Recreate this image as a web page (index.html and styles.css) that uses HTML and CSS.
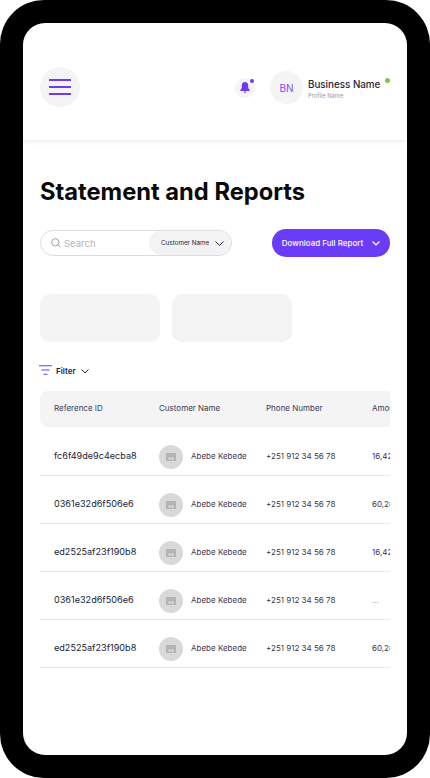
FILE: index.html
```html
<!DOCTYPE html>
<html lang="en">
<head>
  <meta charset="UTF-8">
  <meta name="viewport" content="width=device-width, initial-scale=1.0">
  <title>Statement and Reports</title>
  <link rel="stylesheet" href="styles.css">
</head>
<body>
  <div class="phone">
    <div class="screen">
      <header class="topbar">
        <div class="menu-btn">
          <svg width="22" height="16" viewBox="0 0 22 16"><path d="M0 1h22M0 8h22M0 15h22" stroke="#6a3cf7" stroke-width="2"/></svg>
        </div>
        <div class="topbar-right">
          <div class="bell">
            <svg width="10" height="11" viewBox="0 0 10 11"><path d="M5 0C3 0 1.800 1.500 1.800 3.500V6L.3 8.300V9h9.400v-.7L8.200 6V3.500C8.200 1.500 7 0 5 0zM3.700 9.600h2.600C6.200 10.500 5.700 11 5 11s-1.200-.5-1.300-1.400z" fill="#6a3cf7"/></svg>
            <span class="bell-dot"></span>
          </div>
          <div class="avatar">BN</div>
          <div class="profile">
            <div class="business">Business Name<span class="online"></span></div>
            <div class="profile-name">Profile Name</div>
          </div>
        </div>
      </header>

      <main class="content">
        <h1>Statement and Reports</h1>

        <div class="toolbar">
          <div class="search">
            <div class="search-input">
              <svg width="10" height="10" viewBox="0 0 10 10"><circle cx="4.300" cy="4.300" r="3.600" fill="none" stroke="#8b8b93" stroke-width=".8"/><path d="M7 7l2.500 2.500" stroke="#8b8b93" stroke-width=".8"/></svg>
              <span>Search</span>
            </div>
            <div class="search-type">
              <span>Customer Name</span>
              <svg class="chev" width="9" height="5" viewBox="0 0 9 5"><path d="M.5.500l4 4 4-4" fill="none" stroke="#23233b" stroke-width="1"/></svg>
            </div>
          </div>
          <button class="download">
            Download Full Report
            <svg width="8" height="5" viewBox="0 0 8 5"><path d="M.5.500L4 4 7.500.500" fill="none" stroke="#fff" stroke-width="1.200"/></svg>
          </button>
        </div>

        <div class="cards">
          <div class="card"></div>
          <div class="card"></div>
        </div>

        <div class="filter">
          <svg width="13" height="10" viewBox="0 0 13 10"><path d="M0 .700h13M2.500 5h8M4.500 9.300h4" stroke="#6a3cf7" stroke-width="1.100"/></svg>
          <span>Filter</span>
          <svg width="8" height="5" viewBox="0 0 8 5"><path d="M.5.500L4 4 7.500.500" fill="none" stroke="#23233b" stroke-width="1"/></svg>
        </div>

        <div class="table">
          <div class="row head">
            <div class="col-ref">Reference ID</div>
            <div class="col-name">Customer Name</div>
            <div class="col-phone">Phone Number</div>
            <div class="col-amount">Amount</div>
          </div>
          <div class="row">
            <div class="col-ref ref">fc6f49de9c4ecba8</div>
            <div class="col-name"><span class="pic"><svg width="10" height="8" viewBox="0 0 10 8"><path d="M0 0h10v8H0z" fill="#b4b4b4"/><path d="M1.500 6.500L3.500 4l1.500 1.500L6.500 3.500 8.500 6.500z" fill="#d9d9d9"/></svg></span>Abebe Kebede</div>
            <div class="col-phone">+251 912 34 56 78</div>
            <div class="col-amount">16,420.00</div>
          </div>
          <div class="row">
            <div class="col-ref ref">0361e32d6f506e6</div>
            <div class="col-name"><span class="pic"><svg width="10" height="8" viewBox="0 0 10 8"><path d="M0 0h10v8H0z" fill="#b4b4b4"/><path d="M1.500 6.500L3.500 4l1.500 1.500L6.500 3.500 8.500 6.500z" fill="#d9d9d9"/></svg></span>Abebe Kebede</div>
            <div class="col-phone">+251 912 34 56 78</div>
            <div class="col-amount">60,280.00</div>
          </div>
          <div class="row">
            <div class="col-ref ref">ed2525af23f190b8</div>
            <div class="col-name"><span class="pic"><svg width="10" height="8" viewBox="0 0 10 8"><path d="M0 0h10v8H0z" fill="#b4b4b4"/><path d="M1.500 6.500L3.500 4l1.500 1.500L6.500 3.500 8.500 6.500z" fill="#d9d9d9"/></svg></span>Abebe Kebede</div>
            <div class="col-phone">+251 912 34 56 78</div>
            <div class="col-amount">16,420.00</div>
          </div>
          <div class="row">
            <div class="col-ref ref">0361e32d6f506e6</div>
            <div class="col-name"><span class="pic"><svg width="10" height="8" viewBox="0 0 10 8"><path d="M0 0h10v8H0z" fill="#b4b4b4"/><path d="M1.500 6.500L3.500 4l1.500 1.500L6.500 3.500 8.500 6.500z" fill="#d9d9d9"/></svg></span>Abebe Kebede</div>
            <div class="col-phone">+251 912 34 56 78</div>
            <div class="col-amount muted">...</div>
          </div>
          <div class="row">
            <div class="col-ref ref">ed2525af23f190b8</div>
            <div class="col-name"><span class="pic"><svg width="10" height="8" viewBox="0 0 10 8"><path d="M0 0h10v8H0z" fill="#b4b4b4"/><path d="M1.500 6.500L3.500 4l1.500 1.500L6.500 3.500 8.500 6.500z" fill="#d9d9d9"/></svg></span>Abebe Kebede</div>
            <div class="col-phone">+251 912 34 56 78</div>
            <div class="col-amount">60,280.00</div>
          </div>
        </div>
      </main>
    </div>
  </div>
</body>
</html>
```

FILE: styles.css
```css
body {
  margin: 0;
  background: #fff;
  font-family: Inter, "Liberation Sans", sans-serif;
  color: #23233b;
  overflow: hidden;
}
.phone {
  width: 430px;
  height: 778px;
  box-sizing: border-box;
  padding: 23px;
  background: #000;
  border-radius: 44px;
}
.screen {
  height: 732px;
  background: #fff;
  border-radius: 22px;
  overflow: hidden;
}
.topbar {
  height: 117px;
  box-sizing: border-box;
  padding: 44px 17px 0;
  display: flex;
  justify-content: space-between;
  align-items: flex-start;
  box-shadow: 0 1px 5px rgba(0, 0, 0, 0.1);
}
.menu-btn {
  width: 40px;
  height: 40px;
  border-radius: 50%;
  background: #f4f4f4;
  display: flex;
  align-items: center;
  justify-content: center;
}
.topbar-right {
  display: flex;
  align-items: center;
  margin-top: 4px;
}
.bell {
  position: relative;
  width: 20px;
  height: 20px;
  border-radius: 50%;
  background: #f4f4f4;
  display: flex;
  align-items: center;
  justify-content: center;
  margin-right: 15px;
}
.bell-dot {
  position: absolute;
  top: 1px;
  right: 1px;
  width: 4px;
  height: 4px;
  border-radius: 50%;
  background: #6a3cf7;
}
.avatar {
  width: 33px;
  height: 33px;
  border-radius: 50%;
  background: #f4f4f4;
  color: #7b52e8;
  font-size: 10px;
  display: flex;
  align-items: center;
  justify-content: center;
  margin-right: 5px;
}
.profile {
  padding-top: 3px;
}
.business {
  font-size: 9.800px;
  font-weight: 500;
  line-height: 13px;
  display: flex;
  width: 82px;
  white-space: nowrap;
}
.online {
  flex: none;
  width: 5px;
  height: 5px;
  border-radius: 50%;
  background: #7ac943;
  margin: 0 0 0 5px;
}
.profile-name {
  font-size: 5.800px;
  line-height: 8px;
  color: #9a9aa5;
  margin-top: 1px;
}
.content {
  padding: 0 17px;
}
h1 {
  margin: 37px 0 0;
  font-size: 23.700px;
  line-height: 29px;
  font-weight: 700;
  color: #0a0a0a;
}
.toolbar {
  display: flex;
  justify-content: space-between;
  align-items: center;
  margin-top: 23px;
}
.search {
  width: 192px;
  height: 26px;
  box-sizing: border-box;
  border: 1px solid #dcdcdc;
  border-radius: 13px;
  display: flex;
  justify-content: space-between;
  overflow: hidden;
}
.search-input {
  display: flex;
  align-items: center;
  gap: 3px;
  padding-left: 10px;
  font-size: 9.500px;
  color: #b5b5bb;
}
.search-type {
  width: 82px;
  box-sizing: border-box;
  background: #f3f3f5;
  border-radius: 13px;
  padding-left: 12px;
  display: flex;
  align-items: center;
  gap: 6px;
  font-size: 6.300px;
  white-space: nowrap;
}
.download {
  width: 118px;
  height: 28px;
  border: none;
  border-radius: 14px;
  background: #6a3cf7;
  color: #fff;
  font-family: inherit;
  font-size: 8px;
  font-weight: 500;
  display: flex;
  align-items: center;
  justify-content: center;
  gap: 9px;
  padding: 0;
}
.cards {
  display: flex;
  gap: 12px;
  margin-top: 37px;
}
.card {
  width: 120px;
  height: 48px;
  border-radius: 10px;
  background: #f4f4f4;
}
.filter {
  display: flex;
  align-items: center;
  font-size: 8px;
  font-weight: 600;
  margin-top: 22px;
  height: 14px;
}
.filter svg:first-child {
  margin-left: -1px;
  margin-top: -3px;
}
.filter span {
  margin: 0 5px 0 4px;
}
.table {
  margin-top: 13px;
  overflow: hidden;
}
.row {
  display: flex;
  align-items: center;
  height: 48px;
  box-sizing: border-box;
  padding: 8px 0 0 14px;
  border-bottom: 1px solid #e8e8e8;
  font-size: 8px;
  white-space: nowrap;
  color: #3a3a50;
}
.row.head {
  height: 37px;
  padding: 0 0 2px 14px;
  background: #f4f4f4;
  border-bottom: 1px solid #fff;
  border-radius: 8px 0 0 8px;
}
.col-ref {
  flex: none;
  width: 105px;
}
.ref {
  font-size: 9.100px;
  color: #1b1b33;
}
.col-name {
  flex: none;
  width: 107px;
  display: flex;
  align-items: center;
}
.col-phone {
  flex: none;
  width: 106px;
}
.col-amount {
  flex: none;
}
.muted {
  color: #9a9aa5;
}
.pic {
  flex: none;
  width: 24px;
  height: 24px;
  border-radius: 50%;
  background: #d9d9d9;
  display: flex;
  align-items: center;
  justify-content: center;
  margin: 2px 8px 0 0;
}
```
